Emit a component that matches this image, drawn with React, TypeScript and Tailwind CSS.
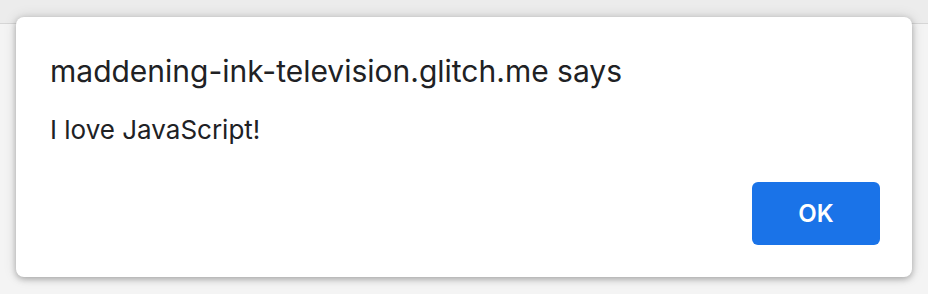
export default function App() {
  return (
    <div className="relative h-[294px] w-[928px] overflow-hidden bg-[#f4f4f4] font-['Inter',sans-serif]">
      <div className="h-[24px] border-b border-[#d6d6d6] bg-[#ececec]" />
      <div className="absolute left-[16px] top-[17px] h-[260px] w-[896px] rounded-[8px] bg-white px-[34px] pt-[36px] shadow-[0_2px_6px_rgba(0,0,0,0.28),0_0_14px_rgba(0,0,0,0.12)]">
        <h1 className="text-[30px] leading-[36px] text-[#202124]">maddening-ink-television.glitch.me says</h1>
        <p className="mt-[25px] text-[26px] leading-[32px] text-[#202124]">I love JavaScript!</p>
        <div className="mt-[36px] flex justify-end">
          <button className="mr-[-2px] h-[63px] w-[128px] rounded-[6px] bg-[#1a73e8] text-[24px] font-semibold text-white">
            OK
          </button>
        </div>
      </div>
    </div>
  );
}
